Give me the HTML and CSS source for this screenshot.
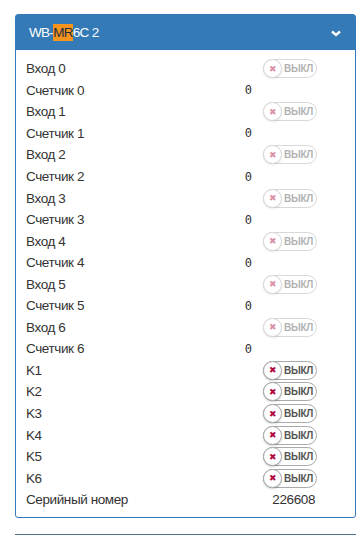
FILE: index.html
```html
<!DOCTYPE html>
<html lang="ru">
<head>
    <meta charset="UTF-8">
    <title>WB-MR6C 2</title>
    <link rel="stylesheet" href="styles.css">
</head>
<body>
    <div class="panel">
        <div class="panel-heading">
            <span class="title">WB-<mark>MR</mark>6C 2</span>
            <svg class="chevron" width="10" height="7" viewBox="0 0 10 7">
                <path d="M1 1.5 L5 5 L9 1.5" fill="none" stroke="#fff" stroke-width="2.4"/>
            </svg>
        </div>
        <div class="panel-body">
            <div class="row"><span>Вход 0</span><span class="switch off"><i>&#x2716;</i><b>выкл</b></span></div>
            <div class="row"><span>Счетчик 0</span><span class="count">0</span></div>
            <div class="row"><span>Вход 1</span><span class="switch off"><i>&#x2716;</i><b>выкл</b></span></div>
            <div class="row"><span>Счетчик 1</span><span class="count">0</span></div>
            <div class="row"><span>Вход 2</span><span class="switch off"><i>&#x2716;</i><b>выкл</b></span></div>
            <div class="row"><span>Счетчик 2</span><span class="count">0</span></div>
            <div class="row"><span>Вход 3</span><span class="switch off"><i>&#x2716;</i><b>выкл</b></span></div>
            <div class="row"><span>Счетчик 3</span><span class="count">0</span></div>
            <div class="row"><span>Вход 4</span><span class="switch off"><i>&#x2716;</i><b>выкл</b></span></div>
            <div class="row"><span>Счетчик 4</span><span class="count">0</span></div>
            <div class="row"><span>Вход 5</span><span class="switch off"><i>&#x2716;</i><b>выкл</b></span></div>
            <div class="row"><span>Счетчик 5</span><span class="count">0</span></div>
            <div class="row"><span>Вход 6</span><span class="switch off"><i>&#x2716;</i><b>выкл</b></span></div>
            <div class="row"><span>Счетчик 6</span><span class="count">0</span></div>
            <div class="row"><span>K1</span><span class="switch"><i>&#x2716;</i><b>выкл</b></span></div>
            <div class="row"><span>K2</span><span class="switch"><i>&#x2716;</i><b>выкл</b></span></div>
            <div class="row"><span>K3</span><span class="switch"><i>&#x2716;</i><b>выкл</b></span></div>
            <div class="row"><span>K4</span><span class="switch"><i>&#x2716;</i><b>выкл</b></span></div>
            <div class="row"><span>K5</span><span class="switch"><i>&#x2716;</i><b>выкл</b></span></div>
            <div class="row"><span>K6</span><span class="switch"><i>&#x2716;</i><b>выкл</b></span></div>
            <div class="row"><span>Серийный номер</span><span class="serial">226608</span></div>
        </div>
    </div>
    <div class="next"></div>
</body>
</html>
```
FILE: styles.css
```css
* { margin: 0; padding: 0; box-sizing: border-box; }

body {
    font-family: 'Liberation Sans', Arial, sans-serif;
    font-size: 13.5px;
    color: #333;
    background: #fff;
    padding: 14px 5px 0 15px;
}

.panel {
    width: 341px;
    border: 1px solid #337ab7;
    border-radius: 3px;
    margin-bottom: 16px;
}

.panel-heading {
    background: #337ab7;
    color: #fff;
    height: 35px;
    padding: 0 14px 0 13px;
    display: flex;
    align-items: center;
    justify-content: space-between;
}

.title { font-size: 13.5px; letter-spacing: -0.7px; }

.title mark {
    background: #f7941d;
    color: #1d2d44;
    padding: 1px 0;
}

.chevron { margin-top: 1px; }

.panel-body {
    padding: 8px 38px 7px 10px;
    letter-spacing: -0.4px;
}

.row {
    height: 21.55px;
    display: flex;
    align-items: center;
    justify-content: space-between;
}

.count {
    font-family: 'DejaVu Sans Mono', monospace;
    font-size: 12px;
    letter-spacing: 0;
    margin-right: 65px;
}

.serial { margin-right: 2px; }

.switch {
    width: 54px;
    height: 19px;
    border: 1px solid #aaa;
    border-radius: 10px;
    display: flex;
    align-items: center;
}

.switch i {
    width: 19px;
    height: 19px;
    margin: -1px 0 -1px -1px;
    border: 1px solid #aaa;
    border-radius: 50%;
    background: #fff;
    box-shadow: 0 1px 2px rgba(0, 0, 0, 0.2);
    color: #b0063f;
    font-style: normal;
    font-size: 9px;
    display: flex;
    align-items: center;
    justify-content: center;
}

.switch b {
    font-size: 10px;
    font-weight: bold;
    text-transform: uppercase;
    letter-spacing: -0.3px;
    color: #555;
    margin-left: 2px;
}

.switch.off { opacity: 0.45; }

.next {
    width: 341px;
    height: 3px;
    border-top: 1px solid #4f6f90;
}
```
